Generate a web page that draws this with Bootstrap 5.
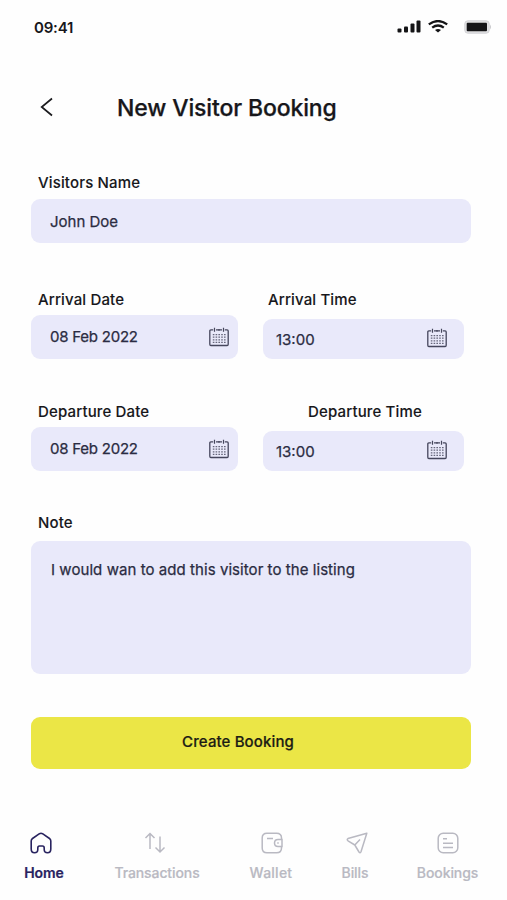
<!DOCTYPE html>
<html lang="en">
<head>
<meta charset="utf-8">
<meta name="viewport" content="width=device-width, initial-scale=1">
<title>New Visitor Booking</title>
<link href="https://cdn.jsdelivr.net/npm/bootstrap@5.3.0/dist/css/bootstrap.min.css" rel="stylesheet">
<style>
body{font-family:Inter,"Liberation Sans",sans-serif;font-weight:500;color:#17171b;background:#fefefe;font-size:15px;line-height:20px}
.screen{width:507px;height:900px;overflow:hidden}
.screen>*{flex-shrink:0}
.status{height:54px;padding:0 15px 0 34px}
.clock{font-size:15px;font-weight:600;letter-spacing:-.2px;padding-top:1px}
.signals{padding-bottom:1px}
.wifi{margin-left:6px}
.battery{margin-left:16px}
.top{height:107px;padding:0 0 1px 40px}
.title{font-size:23px;font-weight:500;line-height:30px;letter-spacing:-.13px;margin:2px 0 0 63px;-webkit-text-stroke:.25px #17171b}
.form-area{padding:12px 36px 0 31px}
.lbl{margin:0 0 0 7px;font-size:15px;letter-spacing:.15px;white-space:nowrap;-webkit-text-stroke:.1px #17171b}
.lbl-time{margin-left:5px}
.lbl-dep{margin-left:45px}
.field{background:#e9e9fa;border-radius:9px;padding:0 8px 0 19px;color:#2b2c42;font-weight:400;-webkit-text-stroke:.25px #2b2c42;white-space:nowrap}
.tall{height:44px;margin-top:5px}
.short{height:40px;margin-top:9px;padding:0 16px 0 13px}
.short span{padding-top:2px}
.short svg{margin-bottom:2px}
.field-name{margin-top:6px;padding-top:2px}
.date-text{letter-spacing:-.23px}
.col-date{width:207px}
.col-time{width:201px;margin-left:25px}
.arrival{margin-top:47px}
.departure{margin-top:43px}
.note-lbl{margin-top:42px}
.note{height:133px;margin-top:8px;padding:19px 20px;letter-spacing:.06px}
.btn-create,.btn-create:hover{height:52px;margin-top:43px;background:#ebe646;border:0;border-radius:9px;font-size:15px;font-weight:500;letter-spacing:.12px;color:#1c1c14;padding:0 26px 3px 0;line-height:20px;-webkit-text-stroke:.2px #1c1c14}
.tabs{height:68px;margin-top:63px}
.tab{color:#b9b9c2;font-size:14px;letter-spacing:-.1px;line-height:20px;white-space:nowrap;-webkit-text-stroke:.2px currentColor}
.tab svg{margin-bottom:9px}
.tab.on{color:#28235f;font-weight:600;padding-left:6px}
.tab.on svg{margin-left:-6px}
.tab-home{width:82px}
.tab-tx{width:150px}
.tab-tx svg{margin-left:-4px}
.tab-wallet{width:78px;letter-spacing:.25px}
.tab-wallet svg{margin-left:2px}
.tab-bills{width:90px}
.tab-bills svg{margin-left:3px}
.tab-bookings{width:95px}
</style>
<script src="https://cdn.jsdelivr.net/npm/bootstrap@5.3.0/dist/js/bootstrap.bundle.min.js"></script>
</head>
<body>
<svg class="d-none" xmlns="http://www.w3.org/2000/svg">
<symbol id="cal" viewBox="0 0 20 20">
<path d="M4.200 2.800H1.900Q.8 2.800 .8 4V17.300Q.8 18.500 1.900 18.500H18.100Q19.200 18.500 19.200 17.300V4Q19.200 2.800 18.100 2.800H15.800M7 2.800h6" fill="none" stroke="#45465c" stroke-width="1.300"/>
<path d="M5.500 .8v4M14.500 .8v4M10 2v1.800" stroke="#45465c" stroke-width="1.200"/>
<path d="M3.800 7.600h12.800M3.800 10.200h12.800M3.800 12.800h12.800M3.800 15.400h12.800" stroke="#66677b" stroke-width="1.200" stroke-dasharray="1.600 1.200"/>
</symbol>
</svg>
<main class="screen d-flex flex-column">
<div class="status d-flex align-items-center">
<span class="clock">09:41</span>
<div class="signals d-flex align-items-center ms-auto">
<svg width="25" height="13" viewBox="0 0 24 13" fill="#141416"><rect y="8.500" width="4" height="4" rx="1"/><rect x="6.500" y="6.500" width="4" height="6" rx="1"/><rect x="13" y="3.500" width="4" height="9" rx="1"/><rect x="19" y=".5" width="4" height="12" rx="1"/></svg>
<svg class="wifi" width="20" height="13" viewBox="0 0 20 13"><path d="M.8 4.400Q10-2.300 19.200 4.400M4.200 7.700Q10 3.300 15.800 7.700" fill="none" stroke="#141416" stroke-width="2.300"/><path d="M7 10Q10 7.800 13 10L10 12.500Z" fill="#141416"/></svg>
<svg class="battery" width="28" height="14" viewBox="0 0 28 14"><rect x=".8" y=".8" width="24.400" height="12.400" rx="3" fill="#e0e0e2" stroke="#d2d2d5"/><path d="M26 4.500q2 2.500 0 5z" fill="#c9c9cc"/><rect x="2.700" y="2.800" width="20.300" height="8.400" rx="1" fill="#141416"/></svg>
</div>
</div>
<header class="top d-flex align-items-center">
<svg width="14" height="20" viewBox="0 0 14 20"><path d="M12 1.500L1.700 10L12 18.500" fill="none" stroke="#1b1b1e" stroke-width="1.700"/></svg>
<h1 class="title">New Visitor Booking</h1>
</header>
<form class="form-area">
<p class="lbl">Visitors Name</p>
<div class="field tall field-name d-flex align-items-center"><span>John Doe</span></div>
<div class="arrival d-flex">
<div class="col-date"><p class="lbl">Arrival Date</p><div class="field tall d-flex align-items-center"><span class="date-text">08 Feb 2022</span><svg class="ms-auto" width="22" height="20"><use href="#cal"/></svg></div></div>
<div class="col-time"><p class="lbl lbl-time">Arrival Time</p><div class="field short d-flex align-items-center"><span>13:00</span><svg class="ms-auto" width="22" height="20"><use href="#cal"/></svg></div></div>
</div>
<div class="departure d-flex">
<div class="col-date"><p class="lbl">Departure Date</p><div class="field tall d-flex align-items-center"><span class="date-text">08 Feb 2022</span><svg class="ms-auto" width="22" height="20"><use href="#cal"/></svg></div></div>
<div class="col-time"><p class="lbl lbl-dep">Departure Time</p><div class="field short d-flex align-items-center"><span>13:00</span><svg class="ms-auto" width="22" height="20"><use href="#cal"/></svg></div></div>
</div>
<p class="lbl note-lbl">Note</p>
<div class="field note">I would wan to add this visitor to the listing</div>
<button type="button" class="btn btn-create w-100">Create Booking</button>
</form>
<nav class="tabs d-flex">
<div class="tab tab-home on d-flex flex-column align-items-center"><svg width="22" height="22" viewBox="0 0 22 22" fill="none" stroke="currentColor" stroke-width="1.600"><path d="M1.200 9Q1.200 7.500 2.500 6.500L9.500 1.700Q11 .8 12.500 1.700L19.500 6.500Q20.800 7.500 20.800 9V17Q20.800 20.800 17.500 20.800Q14.200 20.800 14.200 17.500V16Q14.200 14 12.500 14H9.500Q7.800 14 7.800 16V17.500Q7.800 20.800 4.500 20.800Q1.200 20.800 1.200 17Z"/></svg>Home</div>
<div class="tab tab-tx d-flex flex-column align-items-center"><svg width="22" height="22" viewBox="0 0 22 22" fill="none" stroke="currentColor" stroke-width="1.500"><path d="M6 17V1.500M1.500 6L6 1.500L10.500 6M16 4.500V20M11.500 15.500L16 20L20.500 15.500"/></svg>Transactions</div>
<div class="tab tab-wallet d-flex flex-column align-items-center"><svg width="22" height="22" viewBox="0 0 22 22" fill="none" stroke="currentColor" stroke-width="1.500"><path d="M20.500 7.500V6Q20.500 1.200 15.500 1.200H6Q1.200 1.200 1.200 6V16Q1.200 20.800 6 20.800H15.500Q20.500 20.800 20.500 16V14.500M6 6.500h6M21 7.500H17Q13.500 7.500 13.500 11T17 14.500H21ZM17 10.200v1.600"/></svg>Wallet</div>
<div class="tab tab-bills d-flex flex-column align-items-center"><svg width="22" height="22" viewBox="0 0 22 22" fill="none" stroke="currentColor" stroke-width="1.500" stroke-linejoin="round"><path d="M20.800 1.200L2 6.500Q.5 7.500 2 8.800L8.800 13L13 20Q14.200 21.500 15 19.800ZM8.800 13L14 7.500"/></svg>Bills</div>
<div class="tab tab-bookings d-flex flex-column align-items-center"><svg width="22" height="22" viewBox="0 0 22 22" fill="none" stroke="currentColor" stroke-width="1.500"><rect x="1.200" y="1.200" width="19.600" height="19.600" rx="5"/><path d="M6 6.800h4M6 11.200h10M6 15.500h10"/></svg>Bookings</div>
</nav>
</main>
</body>
</html>
